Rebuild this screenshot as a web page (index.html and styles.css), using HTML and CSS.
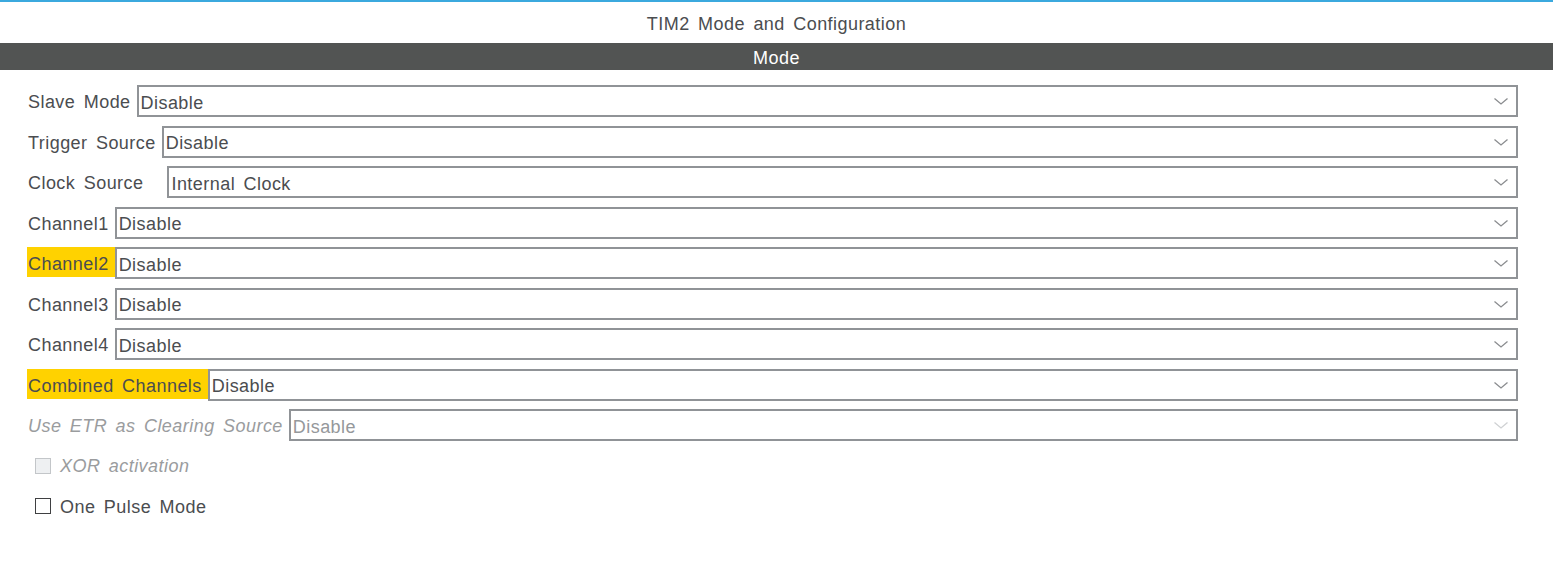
FILE: index.html
```html
<!DOCTYPE html>
<html lang="en">
<head>
    <meta charset="UTF-8">
    <meta name="viewport" content="width=device-width, initial-scale=1.0">
    <title>TIM2 Mode and Configuration</title>
    <link rel="stylesheet" href="styles.css">
</head>
<body>
    <div class="panel">
        <div class="panel-title">TIM2 Mode and Configuration</div>
        <div class="section-bar">Mode</div>

        <div class="form">
            <div class="row">
                <span class="label">Slave Mode</span>
                <div class="select"><span>Disable</span><svg class="chevron" viewBox="0 0 14 7"><path d="M0.5 0.5 L7 6 L13.5 0.5"/></svg></div>
            </div>
            <div class="row">
                <span class="label">Trigger Source</span>
                <div class="select"><span>Disable</span><svg class="chevron" viewBox="0 0 14 7"><path d="M0.5 0.5 L7 6 L13.5 0.5"/></svg></div>
            </div>
            <div class="row">
                <span class="label label-wide">Clock Source</span>
                <div class="select"><span>Internal Clock</span><svg class="chevron" viewBox="0 0 14 7"><path d="M0.5 0.5 L7 6 L13.5 0.5"/></svg></div>
            </div>
            <div class="row">
                <span class="label">Channel1</span>
                <div class="select"><span>Disable</span><svg class="chevron" viewBox="0 0 14 7"><path d="M0.5 0.5 L7 6 L13.5 0.5"/></svg></div>
            </div>
            <div class="row">
                <span class="label highlight">Channel2</span>
                <div class="select"><span>Disable</span><svg class="chevron" viewBox="0 0 14 7"><path d="M0.5 0.5 L7 6 L13.5 0.5"/></svg></div>
            </div>
            <div class="row">
                <span class="label">Channel3</span>
                <div class="select"><span>Disable</span><svg class="chevron" viewBox="0 0 14 7"><path d="M0.5 0.5 L7 6 L13.5 0.5"/></svg></div>
            </div>
            <div class="row">
                <span class="label">Channel4</span>
                <div class="select"><span>Disable</span><svg class="chevron" viewBox="0 0 14 7"><path d="M0.5 0.5 L7 6 L13.5 0.5"/></svg></div>
            </div>
            <div class="row">
                <span class="label highlight">Combined Channels</span>
                <div class="select"><span>Disable</span><svg class="chevron" viewBox="0 0 14 7"><path d="M0.5 0.5 L7 6 L13.5 0.5"/></svg></div>
            </div>
            <div class="row disabled">
                <span class="label">Use ETR as Clearing Source</span>
                <div class="select"><span>Disable</span><svg class="chevron" viewBox="0 0 14 7"><path d="M0.5 0.5 L7 6 L13.5 0.5"/></svg></div>
            </div>
            <div class="row check-row disabled">
                <span class="checkbox"></span>
                <span class="check-label">XOR activation</span>
            </div>
            <div class="row check-row">
                <span class="checkbox"></span>
                <span class="check-label">One Pulse Mode</span>
            </div>
        </div>
    </div>
</body>
</html>
```

FILE: styles.css
```css
body {
    margin: 0;
    padding: 0;
    background: #ffffff;
    font-family: 'Liberation Sans', Arial, sans-serif;
    font-size: 18px;
    letter-spacing: 0.45px;
    word-spacing: 3px;
    color: #4b4d50;
}

.panel {
    border-top: 2px solid #3ba9de;
}

.panel-title {
    height: 41px;
    line-height: 44px;
    text-align: center;
    color: #4b4d50;
}

.section-bar {
    height: 27px;
    line-height: 30px;
    background: #525453;
    color: #ffffff;
    text-align: center;
}

.form {
    display: flex;
    flex-direction: column;
    gap: 8.5px;
    padding: 15px 35px 0 27px;
}

.row {
    display: flex;
    align-items: flex-start;
    height: 32px;
}

.label {
    height: 30px;
    line-height: 35px;
    padding: 0 6px 0 1px;
    white-space: nowrap;
}

.label-wide {
    padding-right: 24px;
}

.highlight {
    background: #ffd200;
}

.select {
    flex: 1;
    display: flex;
    align-items: center;
    justify-content: space-between;
    height: 32px;
    box-sizing: border-box;
    border: 2px solid #909397;
    padding: 3px 8px 0 2px;
    line-height: 28px;
}

.chevron {
    width: 14px;
    height: 7px;
    margin-top: -2px;
    fill: none;
    stroke: #8a8c8f;
    stroke-width: 1.3;
}

.disabled .label,
.disabled .check-label {
    font-style: italic;
    color: #9a9c9e;
}

.disabled .select span {
    color: #95989b;
}

.disabled .chevron {
    stroke: #cfd1d3;
}

.check-row {
    align-items: center;
    padding-left: 8px;
}

.check-label {
    padding-top: 2px;
}

.checkbox {
    width: 16px;
    height: 16px;
    box-sizing: border-box;
    border: 1.5px solid #3f4042;
    background: #ffffff;
    margin-right: 9px;
}

.disabled .checkbox {
    border-color: #c3c6c9;
    background: #eef0f2;
}
```
